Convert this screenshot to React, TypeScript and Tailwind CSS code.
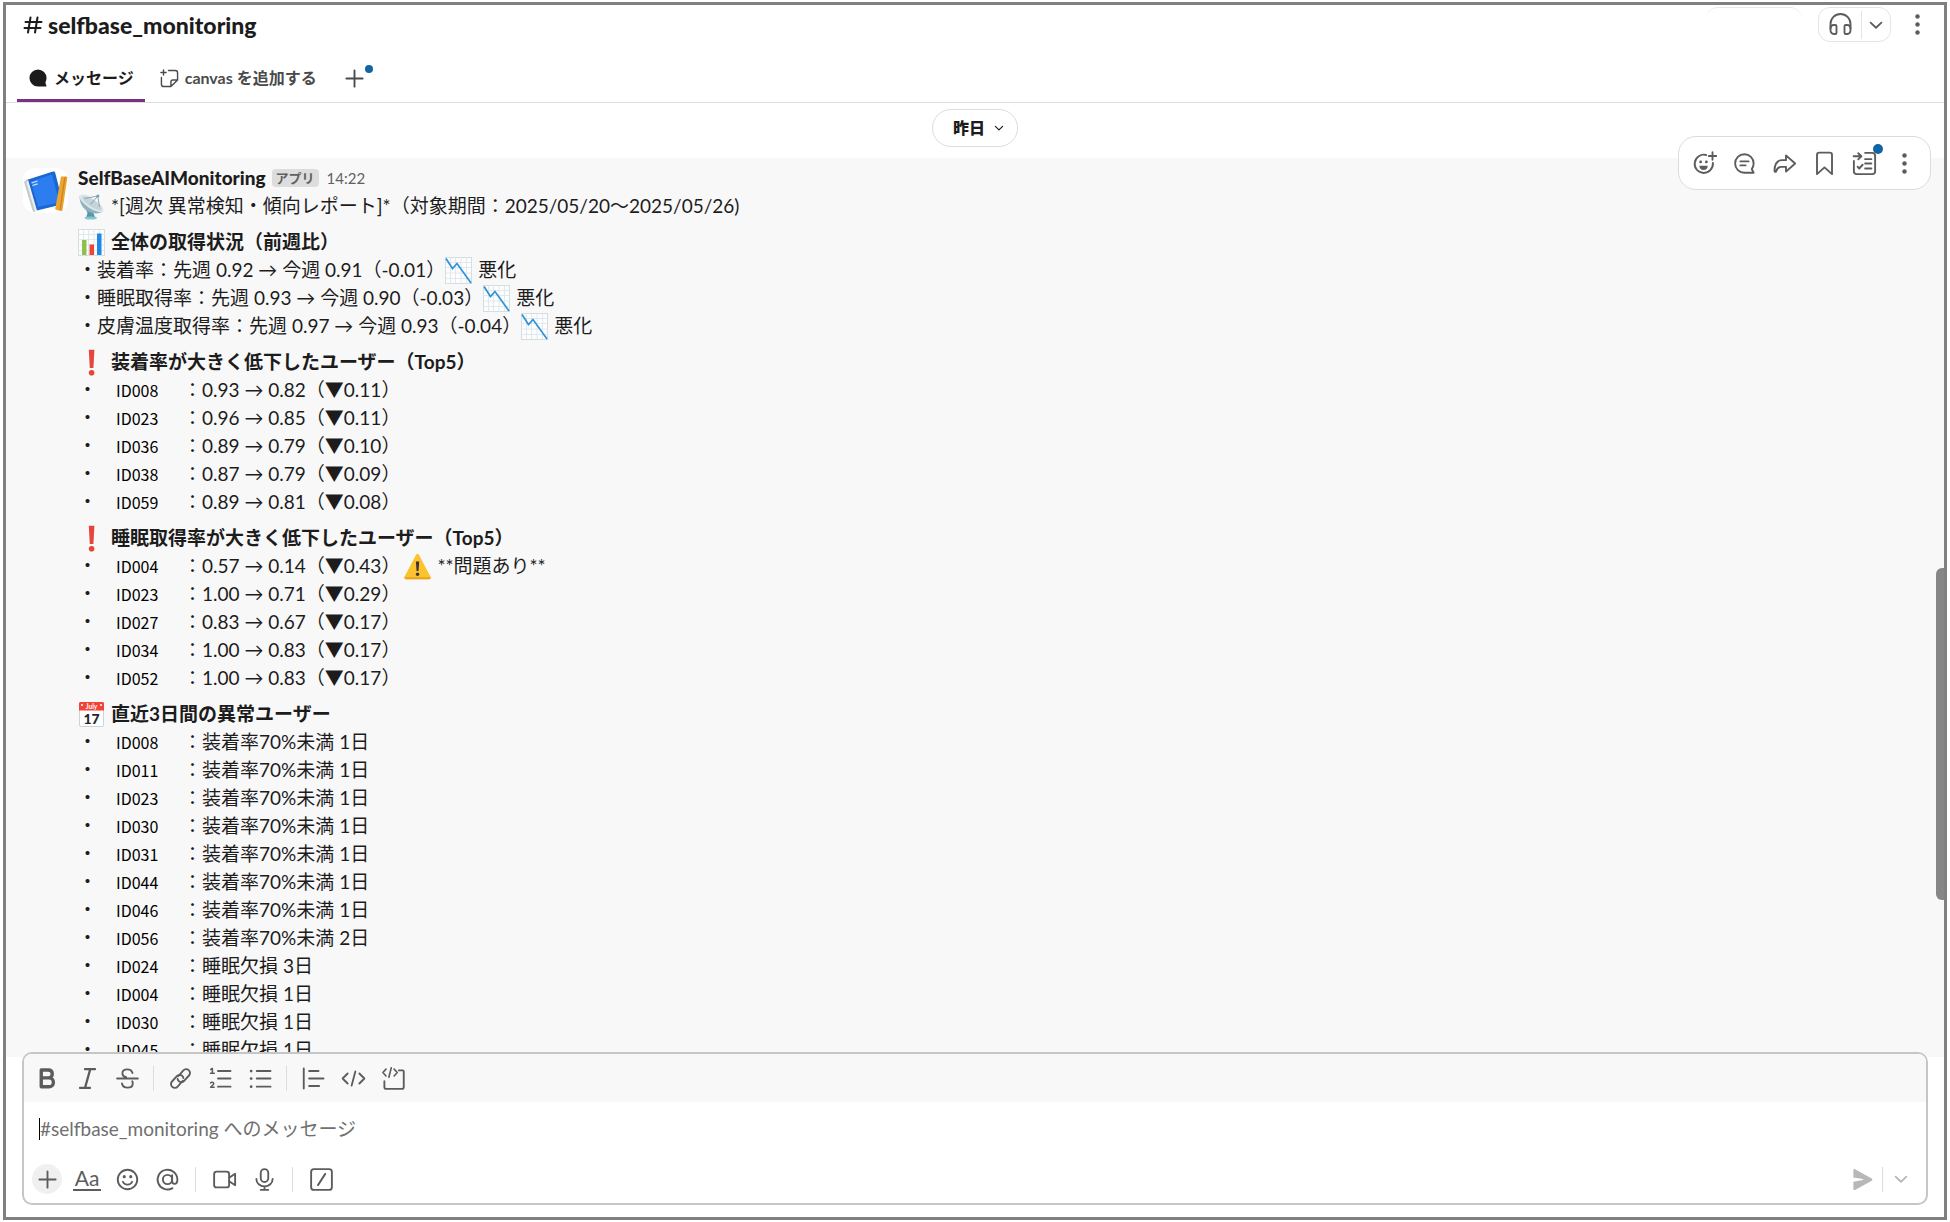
import React from "react";
import clsx from "clsx";

type IconProps = { children: React.ReactNode; className?: string };

const Icon = ({ children, className }: IconProps) => (
  <svg
    viewBox="0 0 20 20"
    fill="none"
    stroke="currentColor"
    strokeWidth="1.5"
    strokeLinecap="round"
    strokeLinejoin="round"
    aria-hidden="true"
    className={clsx("shrink-0", className ?? "size-[25px]")}
  >
    {children}
  </svg>
);

const Chevron = ({ className }: { className?: string }) => (
  <Icon className={className}>
    <path d="M5.5 8 10 12.3 14.5 8" />
  </Icon>
);

const Kebab = () => (
  <Icon>
    <g fill="currentColor" stroke="none">
      <circle cx="10" cy="3.6" r="1.8" />
      <circle cx="10" cy="10" r="1.8" />
      <circle cx="10" cy="16.4" r="1.8" />
    </g>
  </Icon>
);

const Headphones = () => (
  <Icon>
    <path d="M2 13V9.6a8 8 0 0 1 16 0V13" />
    <path d="M2 13.5c0-1.9 1.1-3.1 2.6-3.1h1.2c.6 0 1 .4 1 1v5.2c0 .6-.4 1-1 1H4.6C3.1 17.6 2 16.3 2 14.5z" />
    <path d="M18 13.5c0-1.9-1.1-3.1-2.6-3.1h-1.2c-.6 0-1 .4-1 1v5.2c0 .6.4 1 1 1h1.2c1.5 0 2.6-1.3 2.6-3.1z" />
  </Icon>
);

const AddReaction = () => (
  <Icon>
    <path d="M11.3 3.2a7.3 7.3 0 1 0 5.4 6.3" />
    <path d="M16.4 1v6M13.4 4h6" />
    <g fill="currentColor" stroke="none">
      <circle cx="6.900" cy="8.700" r="1.150" />
      <circle cx="11.500" cy="8.700" r="1.150" />
      <path d="M5.9 11.7h6.7c0 2.1-1.4 3.5-3.35 3.5S5.9 13.8 5.9 11.7z" />
    </g>
  </Icon>
);

const Thread = () => (
  <Icon>
    <path d="M17.3 10a7.4 7.4 0 1 0-7.4 7.4h7.4l-1.5-3a7.3 7.3 0 0 0 1.5-4.4z" />
    <path d="M6.7 8.3h6.6M6.7 11.5h4.2" />
  </Icon>
);

const Share = () => (
  <Icon>
    <path d="M11.2 3.5 18.5 10l-7.3 6.500v-3.800H7.500c-2.200 0-3.300 1-4.200 3.600-.2.600-1.300.5-1.300-.3 0-5 2-8.700 6.200-8.700h3z" />
  </Icon>
);

const Bookmark = () => (
  <Icon>
    <path d="M4 3.2C4 2 4.8 1.3 5.8 1.3h8.4c1 0 1.8.7 1.8 1.9v15.3l-6-5.4-6 5.4z" />
  </Icon>
);

const AddToList = () => (
  <Icon>
    <path d="M10.5 1.5h5.7c1.300 0 2.300 1 2.300 2.300v12.400c0 1.300-1 2.300-2.300 2.300H3.800c-1.300 0-2.300-1-2.300-2.300V8" />
    <path d="M1.3 4.2h5.700M5 1.800 7.500 4.200 5 6.700" />
    <path d="M10.5 6.500h5M10.500 10h5M10.500 14h5M4.500 12.600l1.300 1.400 2.700-3" />
  </Icon>
);

const Plus = () => (
  <Icon>
    <path d="M10 3.500v13M3.500 10h13" />
  </Icon>
);

const Bold = () => (
  <Icon>
    <path
      strokeWidth="2.700"
      d="M5 3.200h5.600c2 0 3.200 1.200 3.200 3.100s-1.200 3.200-3.200 3.200H5zM5 9.500h6.200c2.200 0 3.500 1.500 3.500 3.600s-1.400 3.500-3.500 3.500H5z"
    />
  </Icon>
);

const Italic = () => (
  <Icon>
    <path strokeWidth="1.800" d="M8 2.500h8M4 17.500h8M12.200 2.500 8 17.500" />
  </Icon>
);

const Strike = () => (
  <Icon>
    <path d="M1.700 10h16.600M14 5.600c-.5-1.900-2-2.900-4.100-2.900-2.400 0-4 1.300-4 3.200 0 1.500 1 2.500 3 3.100M5.600 14c.4 2.100 2 3.300 4.400 3.300s4.200-1.300 4.200-3.400c0-.7-.1-1.200-.4-1.700" />
  </Icon>
);

const LinkIcon = () => (
  <Icon>
    <path d="M8.200 8.200 12.300 3.500a3 3 0 0 1 4.300-.2 3 3 0 0 1 .2 4.300l-3.900 4.300a3 3 0 0 1-4.300.2 3 3 0 0 1-.9-1.800" />
    <path d="M11.800 11.800 7.700 16.500a3 3 0 0 1-4.300.2 3 3 0 0 1-.2-4.300l3.900-4.300a3 3 0 0 1 4.300-.2 3 3 0 0 1 .9 1.800" />
  </Icon>
);

const OrderedList = () => (
  <Icon>
    <path d="M8 4h10M8 10h10M8 16.500h10" />
    <path strokeWidth="1.200" d="M2.200 2.800 3.500 2v3.800M2 5.800h3M2 13.600c.5-1 2.600-.9 2.600.4 0 1-1.300 1.500-2.500 3h2.800" />
  </Icon>
);

const BulletList = () => (
  <Icon>
    <path d="M7 4h11M7 10h11M7 16.500h11" />
    <g fill="currentColor" stroke="none">
      <circle cx="2.500" cy="4" r="1.100" />
      <circle cx="2.500" cy="10" r="1.100" />
      <circle cx="2.500" cy="16.500" r="1.100" />
    </g>
  </Icon>
);

const Quote = () => (
  <Icon>
    <path d="M2.200 2v16M6.500 4h7.500M6.500 10h11.500M6.500 16h8" />
  </Icon>
);

const Code = () => (
  <Icon>
    <path d="M5.300 6 1.300 10l4 4M14.700 6l4 4-4 4M11.500 4.300l-3 11.400" />
  </Icon>
);

const CodeBlock = () => (
  <Icon>
    <path d="M14.300 3.500h3c.5 0 .9.400.9.900v12.300c0 .9-.7 1.600-1.600 1.600H4.300c-.9 0-1.600-.7-1.600-1.600v-4.500" />
    <path strokeWidth="1.300" d="M4 2.500 1.500 5.200 4 8M10.500 2.500 13 5.200 10.500 8M8.200 1.500 6.300 9" />
  </Icon>
);

const Smile = () => (
  <Icon>
    <circle cx="10" cy="10" r="7.800" />
    <path d="M6.300 11.800c.6 1.500 1.900 2.300 3.700 2.300s3.100-.8 3.700-2.300" />
    <g fill="currentColor" stroke="none">
      <circle cx="7.400" cy="7.700" r="1.250" />
      <circle cx="12.600" cy="7.700" r="1.250" />
    </g>
  </Icon>
);

const Mention = () => (
  <Icon>
    <circle cx="10" cy="10" r="3.700" />
    <path d="M13.700 6.600V11c0 1.600.7 2.500 1.900 2.500 1.400 0 2.300-1.200 2.300-3.500A7.900 7.900 0 1 0 14 16.900" />
  </Icon>
);

const Video = () => (
  <Icon>
    <path d="M3.700 3.700h8c1.200 0 2 .8 2 2v8.600c0 1.200-.8 2-2 2h-8c-1.200 0-2-.8-2-2V5.700c0-1.200.8-2 2-2z" />
    <path d="m13.700 8.600 4.800-3.200v9.200l-4.800-3.200" />
  </Icon>
);

const Mic = () => (
  <Icon>
    <rect x="7" y="1.700" width="6" height="10.300" rx="3" />
    <path d="M3.500 9.500c0 3.500 2.800 6 6.500 6s6.500-2.500 6.500-6M10 15.500v2.800M7 18.300h6" />
  </Icon>
);

const Slash = () => (
  <Icon>
    <rect x="1.700" y="1.700" width="16.600" height="16.600" rx="2.200" />
    <path d="M13 5.500 7.200 14.500" />
  </Icon>
);

const Send = () => (
  <Icon>
    <path
      fill="currentColor"
      stroke="none"
      d="M2.700 2.500c0-.7.7-1.100 1.300-.8l13.400 7.400c.7.400.7 1.400 0 1.800L4 18.300c-.6.3-1.300-.1-1.300-.8v-5.800l7.600-1.300c.5-.1.500-.7 0-.8L2.700 8.300z"
    />
  </Icon>
);

const emojiClass = "inline-block size-[27px] shrink-0 align-middle";

const Satellite = () => (
  <svg viewBox="0 0 27 27" className={emojiClass} role="img" aria-label="衛星アンテナ">
    <path d="M7 14 9.500 20 8 25h9.500L14 17z" fill="#5796a6" />
    <ellipse cx="12.700" cy="25" rx="6.300" ry="1.600" fill="#8cc3cf" />
    <path d="M1.800 2.500C.5 10 6 19 15.500 20.300c4 .5 8-.3 9.500-2.300z" fill="#8fb3be" />
    <ellipse cx="13.400" cy="10.300" rx="14" ry="5" transform="rotate(34 13.400 10.300)" fill="#dbe7eb" />
    <ellipse cx="13.900" cy="10.200" rx="11.500" ry="3.500" transform="rotate(34 13.900 10.200)" fill="#c3d5db" />
    <path d="M12.500 11.500 19.800 3M6.500 5.500 19.800 3 21.500 14" fill="none" stroke="#7c949c" strokeWidth=".8" />
    <circle cx="19.900" cy="3" r="1.500" fill="#6ea3b0" />
  </svg>
);

const GridPaper = () => (
  <>
    <rect x=".5" y=".5" width="26" height="26" fill="#fdfdfd" stroke="#d3dee2" />
    <path d="M5.500 0v27M10.500 0v27M16 0v27M21.500 0v27M0 5.500h27M0 10.500h27M0 16h27M0 21.500h27" stroke="#d8e4e8" strokeWidth=".8" />
  </>
);

const BarChart = () => (
  <svg viewBox="0 0 27 27" className={emojiClass} role="img" aria-label="棒グラフ">
    <GridPaper />
    <path d="M4 11h4.500v15H4z" fill="#8bc34a" />
    <path d="M11.500 15.500H16V26h-4.500z" fill="#ef4335" />
    <path d="M19 4.500h4.500V26H19z" fill="#1e88e5" />
  </svg>
);

const ChartDown = () => (
  <svg viewBox="0 0 27 27" className={emojiClass} role="img" aria-label="下降グラフ">
    <GridPaper />
    <path d="M1 1.500 7.500 11.500 12 6.500 26 26" fill="none" stroke="#2e93d6" strokeWidth="1.700" />
  </svg>
);

const Exclamation = () => (
  <svg viewBox="0 0 27 27" className={emojiClass} role="img" aria-label="注意">
    <path d="M10.800.7h5.600l-1 18.300h-3.600z" fill="#e5453a" />
    <circle cx="13.600" cy="23.700" r="2.800" fill="#e5453a" />
  </svg>
);

const Warning = () => (
  <svg viewBox="0 0 27 27" className={emojiClass} role="img" aria-label="警告">
    <path d="M12.200 1.500c.6-1 2-1 2.600 0l11.700 22.300c.6 1.100-.1 2.400-1.400 2.400H1.900C.6 26.200 0 24.900.5 23.800z" fill="#fcc32e" />
    <path d="M.5 24.300c0 1 .5 1.900 1.400 1.900h23.200c1 0 1.700-1 1.500-1.900z" fill="#e9a31b" />
    <path d="M11.900 8.500h3.300l-.7 9.500h-1.900z" fill="#3a3330" />
    <circle cx="13.550" cy="21.300" r="1.700" fill="#3a3330" />
  </svg>
);

const CalendarEmoji = () => (
  <svg viewBox="0 0 27 27" className={emojiClass} role="img" aria-label="カレンダー">
    <rect x="1.500" y="1.500" width="24" height="24" rx="1.500" fill="#fff" stroke="#cfd3d6" />
    <path d="M1 2.500C1 1.700 1.700 1 2.500 1h22c.8 0 1.500.7 1.500 1.500V9.500H1z" fill="#f2453a" />
    <circle cx="4" cy="4" r="1" fill="#fff" />
    <circle cx="23" cy="4" r="1" fill="#fff" />
    <text x="13.500" y="7.700" textAnchor="middle" fontSize="6.500" fontWeight="700" fill="#fff" fontFamily="Lato">July</text>
    <text x="13.500" y="22.700" textAnchor="middle" fontSize="14" fontWeight="900" fill="#25282b" fontFamily="Lato">17</text>
  </svg>
);

const BookAvatar = () => (
  <svg viewBox="0 0 45 45" className="size-[45px] shrink-0 rounded-xl bg-white" role="img" aria-label="SelfBaseAIMonitoring">
    <path d="M2 13 5 10.500l9 31-2.500 2.500c-1 0-1.500-.5-1.900-1.500L1.300 15c-.2-1 0-1.500.7-2z" fill="#c6c9cb" />
    <path d="m3.500 14.500 2-2.500 8.500 29.500-2 2z" fill="#eceff0" />
    <path d="M5 11.500 30 3.500c1-.3 2 .2 2.200 1.200l7.600 30c.2.900-.3 1.600-1.200 1.900L14 42.500z" fill="#1b66d2" />
    <path d="M8 13.500 29 6.500l7.500 28L15 39z" fill="#2b7df0" />
    <path d="m8.500 15 6-2M9.500 17.500l5-1.600" stroke="#cfe2fb" strokeWidth="1.200" />
    <path d="M38 8.500h5.300c.7 0 1.200.6 1.100 1.300L39.500 42c-.1.900-.9 1.400-1.700 1.100l-4.600-1.300c-.7-.2-1-.8-.9-1.500z" fill="#eba42f" />
    <path d="m42 9-5 33" stroke="#c9821d" strokeWidth="1.200" />
  </svg>
);

const ToolButton = ({ label, children, className }: IconProps & { label: string }) => (
  <button
    type="button"
    aria-label={label}
    className={clsx("flex h-9 items-center justify-center", className ?? "w-10")}
  >
    {children}
  </button>
);

type Row = { id: string; value: string; note?: string };

const wearRows: Row[] = [
  { id: "ID008", value: "0.93 → 0.82（▼0.11）" },
  { id: "ID023", value: "0.96 → 0.85（▼0.11）" },
  { id: "ID036", value: "0.89 → 0.79（▼0.10）" },
  { id: "ID038", value: "0.87 → 0.79（▼0.09）" },
  { id: "ID059", value: "0.89 → 0.81（▼0.08）" },
];

const sleepRows: Row[] = [
  { id: "ID004", value: "0.57 → 0.14（▼0.43）", note: "**問題あり**" },
  { id: "ID023", value: "1.00 → 0.71（▼0.29）" },
  { id: "ID027", value: "0.83 → 0.67（▼0.17）" },
  { id: "ID034", value: "1.00 → 0.83（▼0.17）" },
  { id: "ID052", value: "1.00 → 0.83（▼0.17）" },
];

const recentRows: Row[] = [
  { id: "ID008", value: "装着率70%未満 1日" },
  { id: "ID011", value: "装着率70%未満 1日" },
  { id: "ID023", value: "装着率70%未満 1日" },
  { id: "ID030", value: "装着率70%未満 1日" },
  { id: "ID031", value: "装着率70%未満 1日" },
  { id: "ID044", value: "装着率70%未満 1日" },
  { id: "ID046", value: "装着率70%未満 1日" },
  { id: "ID056", value: "装着率70%未満 2日" },
  { id: "ID024", value: "睡眠欠損 3日" },
  { id: "ID004", value: "睡眠欠損 1日" },
  { id: "ID030", value: "睡眠欠損 1日" },
  { id: "ID045", value: "睡眠欠損 1日" },
];

const summary = [
  "装着率：先週 0.92 → 今週 0.91（-0.01）",
  "睡眠取得率：先週 0.93 → 今週 0.90（-0.03）",
  "皮膚温度取得率：先週 0.97 → 今週 0.93（-0.04）",
];

type SectionProps = { icon: React.ReactNode; title: string; children: React.ReactNode };

const Section = ({ icon, title, children }: SectionProps) => (
  <section>
    <h2 className="flex h-7 items-center gap-1.5 font-bold">
      {icon}
      {title}
    </h2>
    {children}
  </section>
);

const UserList = ({ rows }: { rows: Row[] }) => (
  <ul>
    {rows.map((row, index) => (
      <li key={index} className="flex h-7 items-center">
        <span className="w-[38px]">・</span>
        <span className="w-[67px] font-['Noto_Sans_CJK_JP',sans-serif] text-base leading-7 text-black">
          {row.id}
        </span>
        <span>：{row.value}</span>
        {row.note && (
          <span className="ml-1 flex items-center gap-1.5">
            <Warning />
            {row.note}
          </span>
        )}
      </li>
    ))}
  </ul>
);

const Header = () => (
  <header className="border-b border-[#dddddd]">
    <div className="flex h-11 items-start justify-between pl-[17px] pr-3.5">
      <h1 className="flex items-center gap-[5px] text-[23px] leading-10 font-black">
        <Icon className="size-5">
          <path strokeWidth="2" d="M7.500 2.500 5 17.500M14.500 2.500 12 17.500M2.500 7h16M1.500 13h16" />
        </Icon>
        selfbase_monitoring
      </h1>
      <div className="flex items-start pt-0.5 text-[#5c5c5c]">
        <div className="mr-4 h-3 w-24 rounded-t-xl border-t border-[#e8e8e8]" />
        <div className="mr-3.5 flex h-[35px] items-center rounded-xl border border-[#e4e4e4]">
          <button type="button" aria-label="ハドルミーティング" className="flex h-7 w-[43px] items-center justify-center border-r border-[#e4e4e4]">
            <Headphones />
          </button>
          <button type="button" aria-label="ハドルのオプション" className="flex h-7 w-7 items-center justify-center">
            <Chevron className="size-6" />
          </button>
        </div>
        <button type="button" aria-label="その他" className="flex h-[34px] items-center">
          <Kebab />
        </button>
      </div>
    </div>
    <nav className="flex h-[53px] pl-[11px] text-base text-[#4a4a4a]">
      <a href="#messages" className="flex items-center gap-[7px] border-b-3 border-[#7c3085] pt-2 pr-[11px] pl-3 font-bold text-[#1d1c1d]">
        <Icon className="size-[18px]">
          <path fill="currentColor" stroke="none" d="M19.500 10a9.500 9.500 0 1 0-9.500 9.500h9.500l-1.300-4.600A9.400 9.400 0 0 0 19.500 10z" />
        </Icon>
        メッセージ
      </a>
      <a href="#canvas" className="flex items-center gap-1.5 pt-2 pb-[3px] pl-[15px] font-bold">
        <Icon className="size-[19px]">
          <path d="M9 1.500h7c1.400 0 2.500 1 2.500 2.500v7.500l-7 7H4c-1.400 0-2.500-1-2.500-2.500V9M18.500 11.500h-5c-1.200 0-2 .8-2 2v5M3.700 1v5.400M1 3.700h5.400" />
        </Icon>
        canvas を追加する
      </a>
      <button type="button" aria-label="タブを追加" className="relative ml-[25px] flex items-center pt-2 pb-[3px]">
        <Plus />
        <span className="absolute top-4 -right-1.5 size-2 rounded-full bg-[#1264a3]" />
      </button>
    </nav>
  </header>
);

const MessageActions = () => (
  <div className="absolute -top-[22px] right-[13px] flex h-[54px] items-center rounded-[18px] border border-[#dcdcdc] bg-white pr-1.5 pl-[5px] text-[#5c5c5c]">
    <ToolButton label="リアクションを追加"><AddReaction /></ToolButton>
    <ToolButton label="スレッドで返信"><Thread /></ToolButton>
    <ToolButton label="転送"><Share /></ToolButton>
    <ToolButton label="後で"><Bookmark /></ToolButton>
    <ToolButton label="リストに追加" className="relative w-10">
      <AddToList />
      <span className="absolute -top-px right-px size-2.5 rounded-full bg-[#1264a3]" />
    </ToolButton>
    <ToolButton label="その他のアクション"><Kebab /></ToolButton>
  </div>
);

const Message = () => (
  <article className="relative flex flex-1 gap-2.5 bg-[#f8f8f8] pt-1.5 pl-[17px]">
    <div className="pt-1">
      <BookAvatar />
    </div>
    <div className="flex-1 text-[19px] leading-7">
      <div className="flex h-7 items-center gap-1.5">
        <span className="font-black">SelfBaseAIMonitoring</span>
        <span className="rounded-sm bg-[#dddddd] px-1 text-[13px] leading-[18px] font-bold text-[#616161]">アプリ</span>
        <time className="ml-0.5 text-[15px] text-[#616161]">14:22</time>
      </div>
      <div className="flex flex-col gap-2">
        <p className="flex h-7 items-center gap-1.5">
          <Satellite />
          *[週次 異常検知・傾向レポート]*（対象期間：2025/05/20〜2025/05/26)
        </p>
        <Section icon={<BarChart />} title="全体の取得状況（前週比）">
          {summary.map((text) => (
            <p key={text} className="flex h-7 items-center">
              <span>・{text}</span>
              <ChartDown />
              <span className="ml-1.5">悪化</span>
            </p>
          ))}
        </Section>
        <Section icon={<Exclamation />} title="装着率が大きく低下したユーザー（Top5）">
          <UserList rows={wearRows} />
        </Section>
        <Section icon={<Exclamation />} title="睡眠取得率が大きく低下したユーザー（Top5）">
          <UserList rows={sleepRows} />
        </Section>
        <Section icon={<CalendarEmoji />} title="直近3日間の異常ユーザー">
          <UserList rows={recentRows} />
        </Section>
      </div>
    </div>
    <MessageActions />
  </article>
);

const Divider = ({ className }: { className?: string }) => (
  <span className={clsx("h-[25px] w-px bg-[#dddddd]", className)} />
);

const Composer = () => (
  <form className="relative mx-4 -mt-[5px] mb-3 overflow-hidden rounded-[10px] border-2 border-[#c6c6c6] bg-white text-[#5c5c5c]">
    <div className="flex h-12 items-center bg-[#f8f8f8] pl-[3px]">
      <ToolButton label="太字"><Bold /></ToolButton>
      <ToolButton label="斜体"><Italic /></ToolButton>
      <ToolButton label="取り消し線"><Strike /></ToolButton>
      <Divider className="mx-1.5" />
      <ToolButton label="リンク"><LinkIcon /></ToolButton>
      <ToolButton label="順序付きリスト"><OrderedList /></ToolButton>
      <ToolButton label="箇条書き"><BulletList /></ToolButton>
      <Divider className="mx-1.5" />
      <ToolButton label="引用"><Quote /></ToolButton>
      <ToolButton label="コード"><Code /></ToolButton>
      <ToolButton label="コードブロック"><CodeBlock /></ToolButton>
    </div>
    <div className="flex h-[53px] items-center pl-[15px]">
      <span className="h-[22px] w-px bg-black" />
      <input
        type="text"
        aria-label="メッセージ"
        placeholder="#selfbase_monitoring へのメッセージ"
        className="flex-1 text-[19px] leading-7 outline-none placeholder:text-[#707070]"
      />
    </div>
    <div className="flex h-12 items-center pr-[7px] pl-[3px]">
      <ToolButton label="添付">
        <span className="flex size-[30px] items-center justify-center rounded-full bg-[#f0f0f0]">
          <Plus />
        </span>
      </ToolButton>
      <ToolButton label="書式設定">
        <span className="border-b-2 border-current px-0.5 text-[21px] leading-[22px]">Aa</span>
      </ToolButton>
      <ToolButton label="絵文字"><Smile /></ToolButton>
      <ToolButton label="メンション"><Mention /></ToolButton>
      <Divider className="mx-2" />
      <ToolButton label="ビデオ"><Video /></ToolButton>
      <ToolButton label="音声"><Mic /></ToolButton>
      <Divider className="mx-2" />
      <ToolButton label="ショートカット"><Slash /></ToolButton>
      <div className="ml-auto flex items-center text-[#b8b8b8]">
        <ToolButton label="送信"><Send /></ToolButton>
        <Divider />
        <ToolButton label="送信オプション" className="w-9"><Chevron className="size-6" /></ToolButton>
      </div>
    </div>
  </form>
);

export default function App() {
  return (
    <div className="h-screen bg-white px-[3px] py-0.5 font-['Lato','Noto_Sans_CJK_JP',sans-serif] text-[#1d1c1d]">
      <main className="relative flex h-full flex-col border-3 border-[#808080]">
        <Header />
        <div className="flex min-h-0 flex-1 flex-col overflow-hidden">
          <div className="flex h-[55px] shrink-0 justify-center pt-1.5">
            <button type="button" className="flex h-[38px] items-center gap-1.5 rounded-full border border-[#dddddd] pr-2.5 pl-5 text-base font-black">
              昨日
              <Chevron className="size-4" />
            </button>
          </div>
          <Message />
        </div>
        <Composer />
        <div className="absolute top-[563px] right-0 h-[332px] w-2 rounded-l-md bg-[#868686]" />
      </main>
    </div>
  );
}
